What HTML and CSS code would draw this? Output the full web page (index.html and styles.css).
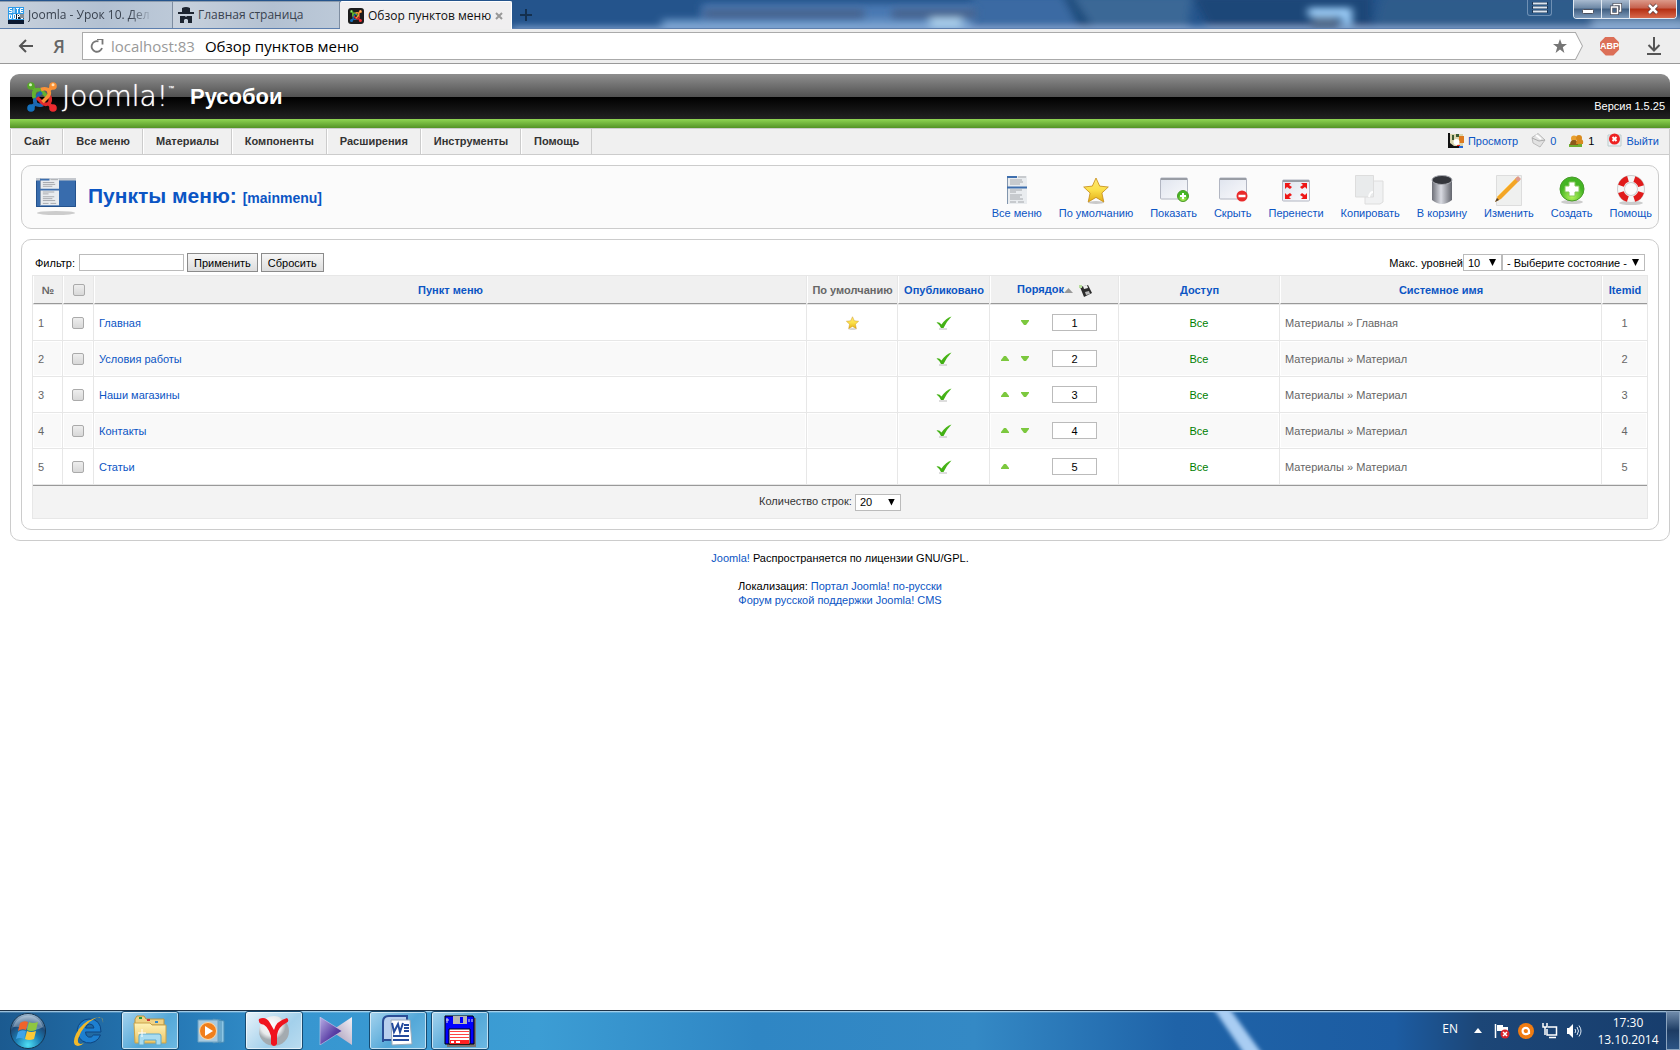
FILE: index.html
```html
<!DOCTYPE html>
<html lang="ru">
<head>
<meta charset="utf-8">
<title>Обзор пунктов меню</title>
<link rel="stylesheet" href="styles.css">
</head>
<body>
<svg class="defs" width="0" height="0" aria-hidden="true">
  <defs>
    <linearGradient id="gold" x1="0" y1="0" x2="0" y2="1"><stop offset="0" stop-color="#ffe873"/><stop offset=".5" stop-color="#fbe04a"/><stop offset="1" stop-color="#e3ae17"/></linearGradient>
    <linearGradient id="win" x1="0" y1="0" x2="1" y2="1"><stop offset="0" stop-color="#dfe4ee"/><stop offset="1" stop-color="#fafafc"/></linearGradient>
    <linearGradient id="steel"><stop offset="0" stop-color="#6e7078"/><stop offset=".45" stop-color="#d9dbe2"/><stop offset="1" stop-color="#63656d"/></linearGradient>
    <radialGradient id="lime" cx=".5" cy=".8"><stop offset="0" stop-color="#b8f55c"/><stop offset="1" stop-color="#44b524"/></radialGradient>
    <linearGradient id="leaf" x1="0" y1="0" x2="0" y2="1"><stop offset="0" stop-color="#4db81c"/><stop offset="1" stop-color="#3fae12"/></linearGradient>
    <radialGradient id="orb" cx=".5" cy=".9" r=".9"><stop offset="0" stop-color="#4fe0f5"/><stop offset=".4" stop-color="#1b7db4"/><stop offset=".7" stop-color="#1d4a78"/><stop offset="1" stop-color="#a9c3d8"/></radialGradient>
    <linearGradient id="folder" x1="0" y1="0" x2="0" y2="1"><stop offset="0" stop-color="#fff3b8"/><stop offset="1" stop-color="#ecc667"/></linearGradient>
    <radialGradient id="pearl" cx=".4" cy=".3"><stop offset="0" stop-color="#fff"/><stop offset=".7" stop-color="#e8eaec"/><stop offset="1" stop-color="#a4abb0"/></radialGradient>
    <linearGradient id="violet" x1="0" y1="0" x2="1" y2="1"><stop offset="0" stop-color="#b9b0e6"/><stop offset=".6" stop-color="#5b3fa6"/><stop offset="1" stop-color="#3a2380"/></linearGradient>
    <linearGradient id="silver" x1="1" y1="0" x2="0" y2="1"><stop offset="0" stop-color="#f3f1f6"/><stop offset="1" stop-color="#9d8fb0"/></linearGradient>
    <symbol id="joomla" viewBox="0 0 30 30">
      <g fill="none" stroke-width="3.600" stroke-linejoin="round">
        <path id="arm" d="M4 4L8 8M7.500 16Q5.500 11 8.500 8.500 12 6.500 15 9.500L20 14.500" stroke="#64b22f"/>
        <path d="M4 4L8 8M7.500 16Q5.500 11 8.500 8.500 12 6.500 15 9.500L20 14.500" stroke="#1c67b0" transform="rotate(270 15 15)"/>
        <path d="M4 4L8 8M7.500 16Q5.500 11 8.500 8.500 12 6.500 15 9.500L20 14.500" stroke="#e32a2c" transform="rotate(180 15 15)"/>
        <path d="M4 4L8 8M7.500 16Q5.500 11 8.500 8.500 12 6.500 15 9.500L20 14.500" stroke="#fa9238" transform="rotate(90 15 15)"/>
        <path d="M7.500 16Q5.500 11 8.500 8.500" stroke="#64b22f"/>
      </g>
      <circle cx="4" cy="4" r="3.800" fill="#55a828"/><circle cx="26" cy="4" r="3.800" fill="#f98f33"/><circle cx="4" cy="26" r="3.800" fill="#1571bd"/><circle cx="26" cy="26" r="3.800" fill="#ee2b2f"/>
      <circle cx="3.500" cy="2.800" r="1.500" fill="#d9f4bd"/><circle cx="26" cy="2.800" r="1.500" fill="#ffe0b8"/>
    </symbol>
    <symbol id="page" viewBox="0 0 20 28">
      <path d="M0 0h20v28H0z" fill="#e9ecef"/><path d="M.5 28V0" fill="none" stroke="#8195ad"/><path d="M0 1h10M0 11.500h20" stroke="#3e6fae" stroke-width="2"/>
      <path d="M11 1h8M3 4h12M3 6h13M3 8h10M3 14h12M3 16h6M3 19h12M3 21h10M3 23h13M3 26h6M11 26h6" stroke="#a5a8ac"/>
    </symbol>
    <symbol id="star" viewBox="0 0 26 27"><ellipse cx="13" cy="25.500" rx="8" ry="1.500" fill="#c9c9c9"/><path d="M13 1l3.700 8.100 8.600.9-6.400 6 1.900 9L13 20.400 5.200 25l1.900-9L.7 10l8.600-.9z" fill="url(#gold)" stroke="#c48a14" stroke-width=".8"/></symbol>
    <symbol id="pane" viewBox="0 0 28 24"><rect x=".5" y="1" width="27" height="21" rx="1" fill="url(#win)" stroke="#b2b6c2"/><path d="M1 2h26" stroke="#999da5" stroke-width="2"/></symbol>
    <symbol id="tick" viewBox="0 0 16 14"><path d="M3 13h8" stroke="#bbb"/><path d="M.5 6.500Q3 5.500 5.500 8.500 10 2 15.500.500 11 5 7.500 12H5Q3.500 8.500.5 6.500z" fill="url(#leaf)"/></symbol>
    <symbol id="up" viewBox="0 0 8 5"><path d="M3 0h2l3 4v1H0V4z" fill="#7cc83e"/></symbol>
    <symbol id="down" viewBox="0 0 8 5"><path d="M0 0h8v1L5 5H3L0 1z" fill="#7cc83e"/></symbol>
  </defs>
</svg>

<header class="browser">
  <div class="titlebar">
    <svg class="glass" width="1168" height="29" viewBox="0 0 1168 29" preserveAspectRatio="none" aria-hidden="true">
      <defs><filter id="soft" x="-20%" y="-80%" width="140%" height="260%"><feGaussianBlur stdDeviation="4"/></filter></defs>
      <path d="M0 0h1168v29H0z" fill="#24548c"/>
      <g filter="url(#soft)">
        <path d="M190 4h280v30H190z" fill="#4a78b2"/><path d="M150 20h320v14H150z" fill="#6c98c8"/><path d="M460-5h160l40 40H460z" fill="#3b6aa3"/><path d="M550-5l20 40h90L640-5z" fill="#1f4b7c"/>
        <path d="M560-5h120l-5 40h-90z" fill="#3b6896"/><path d="M680-5h180v40H700z" fill="#1b4678"/><path d="M870-5h300v40H860z" fill="#2f5c8b"/>
        <path d="M1080 20h100v16h-100z" fill="#7fa0c4"/><path d="M0 28h1168v6H0z" fill="#8fb0dc"/>
      </g>
      <g filter="url(#soft)"><path d="M192 9h160v10H192zM380 9h84v10h-84z" fill="#46648e"/><path d="M418 18h32v11h-32z" fill="#a9cdea"/></g>
      <g filter="url(#soft)"><path d="M796 8h44v20h-10V17h-34z" fill="#9fd0fb"/><path d="M800 17h26v12h-26z" fill="#56708f"/></g>
    </svg>
    <nav class="tabs" aria-label="Вкладки">
      <a class="tab" href="#"><svg width="16" height="17" viewBox="0 0 16 17"><path d="M0 0h16v17H0z" fill="#2d9be9"/><path d="M0 13h16v4H0z" fill="#0a1830"/><path d="M8 7h8v5H8z" fill="#123"/><path d="M4 1.500H1.500V3.500H4V5.500H1M6 1v5M8 1.500h3M9.500 1.500V6M15 1.500h-2.500v4H15M12.500 3.500H15M1.500 7.500v4H3.500V8H1.500M5.500 7.500h2v4h-2zM9.500 12V7.500H11.500V9.500H9.500M13 7v4.500h2V7" stroke="#fff" fill="none"/></svg><span class="tab-name fade">Joomla - Урок 10. Дел</span></a>
      <a class="tab" href="#"><svg width="16" height="17" viewBox="0 0 16 17"><path d="M4 1Q8-1 12 1V5h4v2H0V5h4zM2 9h5l1 1 1-1h5v7h-4v-3l-1-1H7l-1 1v3H2z" fill="#1c2430"/></svg><span class="tab-name">Главная страница</span></a>
      <a class="tab current" href="#"><svg width="16" height="16" viewBox="0 0 16 16"><rect width="16" height="16" rx="3" fill="#1c1c1c"/><use href="#joomla" x="2" y="2" width="12" height="12"/></svg><span class="tab-name">Обзор пунктов меню</span><svg class="tab-close" width="8" height="8" viewBox="0 0 8 8"><path d="M1 1l6 6M7 1L1 7" stroke="#999" stroke-width="2"/></svg></a>
      <button class="new-tab" aria-label="Новая вкладка"><svg width="12" height="12" viewBox="0 0 12 12"><path d="M6 0v12M0 6h12" stroke="#14304f" stroke-width="2"/></svg></button>
    </nav>
    <div class="window-controls">
      <button class="burger" aria-label="Меню"><svg width="16" height="11" viewBox="0 0 16 11"><path d="M0 1.500h16M0 5.500h16M0 9.500h16" stroke="#1b3656" stroke-width="3"/><path d="M1 1.500h14M1 5.500h14M1 9.500h14" stroke="#dce6f0" stroke-width="2"/></svg></button>
      <div class="window-group">
        <button aria-label="Свернуть"><svg width="12" height="12" viewBox="0 0 12 12"><rect x=".5" y="6.500" width="11" height="4" rx="1" fill="#fff" stroke="#4b4f5c"/></svg></button>
        <button aria-label="Развернуть"><svg width="12" height="12" viewBox="0 0 12 12"><g fill="none" stroke="#4b4f5c" stroke-width="3"><path d="M4 3V1.500h6.500V8H9"/><path d="M1.500 4h6v6.500h-6z"/></g><g fill="none" stroke="#fff" stroke-width="1.500"><path d="M4 2.500V1.500h6.500V8H9"/><path d="M1.500 4h6v6.500h-6z"/></g></svg></button>
        <button class="close" aria-label="Закрыть"><svg width="12" height="12" viewBox="0 0 12 12"><path d="M2 2l8 8M10 2l-8 8" stroke="#5a3a3a" stroke-width="4"/><path d="M2 2l8 8M10 2l-8 8" stroke="#fff" stroke-width="2.500"/></svg></button>
      </div>
    </div>
  </div>
  <div class="toolbar">
    <button class="tool" aria-label="Назад"><svg width="16" height="14" viewBox="0 0 16 14"><path d="M15 7H2M8 1L2 7l6 6" fill="none" stroke="#555" stroke-width="2"/></svg></button>
    <button class="tool ya">Я</button>
    <div class="address">
      <svg class="address-shape" width="100%" height="28" aria-hidden="true"><svg x="0" y="0" width="100%" height="28" viewBox="0 0 1500 28" preserveAspectRatio="none"><path d="M.5.500H1492.500L1499.500 14 1492.500 27.500H.5z" fill="#fff" stroke="#aaa"/></svg></svg>
      <svg class="reload" width="14" height="14" viewBox="0 0 14 14"><path d="M12 9A5.300 5.300 0 1 1 8.500 2.400" fill="none" stroke="#777" stroke-width="1.800"/><path d="M7 0h5.500v5.500" fill="none" stroke="#777" stroke-width="1.800"/></svg>
      <span class="host">localhost:83</span><span class="page-name">Обзор пунктов меню</span>
      <svg class="bookmark" width="14" height="14" viewBox="0 0 14 14"><path d="M7 0l1.800 5H14L9.800 8.300 11.400 14 7 10.600 2.600 14l1.600-5.700L0 5h5.200z" fill="#757575"/></svg>
    </div>
    <button class="tool abp"><span>ABP</span></button>
    <button class="tool" aria-label="Загрузки"><svg width="14" height="18" viewBox="0 0 14 18"><path d="M7 0v13M1.500 8L7 13.500 12.500 8M0 17h14" fill="none" stroke="#555" stroke-width="2"/></svg></button>
  </div>
</header>

<div class="admin">
  <div class="banner">
    <svg class="logo" width="30" height="30"><use href="#joomla"/></svg>
    <span class="wordmark">Joomla!<sup>™</sup></span>
    <span class="site">Русобои</span>
    <span class="version">Версия 1.5.25</span>
  </div>
  <div class="main">
    <div class="menubar">
      <nav class="menu"><a href="#">Сайт</a><a href="#">Все меню</a><a href="#">Материалы</a><a href="#">Компоненты</a><a href="#">Расширения</a><a href="#">Инструменты</a><a href="#">Помощь</a></nav>
      <div class="status">
        <a href="#"><svg width="16" height="15" viewBox="0 0 16 15"><path d="M1 1h14v12H1z" fill="#d9d5ae"/><path d="M0 0h2v10l4 3h7v2H0z" fill="#111"/><path d="M4 2h2v5H4zM8 1h3v3H8z" fill="#3c5c34"/><path d="M11 3h5v7h-5z" fill="#de7a1e"/><circle cx="8.500" cy="9" r="3" fill="#fff"/><path d="M11 13h4v2h-4z" fill="#2468d8"/><path d="M9 12h3v1H9z" fill="#e22"/></svg>Просмотр</a>
        <a href="#"><svg width="15" height="15" viewBox="0 0 15 15"><path d="M1 4.500L7 .5 14 7l-5 7-7-4z" fill="#e2e2e2" stroke="#bbb"/><path d="M1 5l7 3 6-1" fill="none" stroke="#aaa"/><path d="M5 2l5 4" stroke="#fff" stroke-width="2"/></svg>0</a>
        <span class="users"><svg width="15" height="12" viewBox="0 0 15 12"><path d="M0 9h13v3H0z" fill="#6fae31"/><circle cx="5" cy="3.500" r="3" fill="#e9a02f"/><circle cx="10" cy="3" r="3" fill="#d98a1b"/><path d="M1 10q0-5 4-5t4 5z" fill="#8c5a1a"/><path d="M7 9q0-5 4-5t3 5z" fill="#d68a20"/></svg>1</span>
        <a href="#"><svg width="15" height="15" viewBox="0 0 15 15"><path d="M1 2h13v11H1z" fill="#eef0f5" stroke="#bcc"/><circle cx="7.500" cy="6" r="5.500" fill="#e22"/><path d="M5.500 4l4 4M9.500 4l-4 4" stroke="#fff" stroke-width="2"/></svg>Выйти</a>
      </div>
    </div>
    <div class="content">
      <section class="box heading">
        <svg width="42" height="38" viewBox="0 0 42 38"><ellipse cx="21" cy="35" rx="19" ry="2" fill="#ccc"/><path d="M1 0h40v29H1z" fill="#386cad"/><path d="M1 1h40" stroke="#c4c8ce" stroke-width="3"/><path d="M1.500 3v25.500h39V3" fill="none" stroke="#24528d"/><use href="#page" x="5" y="0" width="19" height="28"/></svg>
        <h1>Пункты меню: <small>[mainmenu]</small></h1>
        <nav class="actions">
          <a href="#"><svg width="32" height="32"><use href="#page" x="6" y="2" width="20" height="28"/></svg>Все меню</a>
          <a href="#"><svg width="32" height="32"><use href="#star" x="3" y="3" width="26" height="27"/></svg>По умолчанию</a>
          <a href="#"><svg width="32" height="32"><use href="#pane" x="2" y="3" width="28" height="24"/><circle cx="25" cy="22" r="5.500" fill="url(#lime)" stroke="#4c9a28"/><path d="M25 19v6M22 22h6" stroke="#fff" stroke-width="2"/></svg>Показать</a>
          <a href="#"><svg width="32" height="32"><use href="#pane" x="2" y="3" width="28" height="24"/><circle cx="25" cy="22" r="5.500" fill="#e92a2a"/><path d="M21.500 22h7" stroke="#fff" stroke-width="2.500"/></svg>Скрыть</a>
          <a href="#"><svg width="32" height="32"><use href="#pane" x="2" y="5" width="28" height="24"/><g fill="#ee1616"><path d="M5 9h6l-2 2 3 2-2 2-3-2-2 2zM27 9h-6l2 2-3 2 2 2 3-2 2 2zM5 25h6l-2-2 3-2-2-2-3 2-2-2zM27 25h-6l2-2-3-2 2-2 3 2 2-2z"/></g></svg>Перенести</a>
          <a href="#"><svg width="32" height="32"><path d="M11 7h18v21l-3 2H11z" fill="#f0f1f2" stroke="#ddd"/><path d="M1.500 1.500h18V23l-4 0h-14z" fill="#e9ebec" stroke="#ddd"/><path d="M15 23q1-5 4-5" fill="none" stroke="#fff" stroke-width="2"/></svg>Копировать</a>
          <a href="#"><svg width="32" height="32"><path d="M6 6v20q10 8 20 0V6z" fill="url(#steel)"/><ellipse cx="16" cy="6" rx="10" ry="4.500" fill="#34363c" stroke="#a9abb2"/></svg>В корзину</a>
          <a href="#"><svg width="32" height="32"><path d="M3.500 1.500h25v30h-25z" fill="#eff0ef" stroke="#ddd"/><path d="M2 28l3-6L24 3l3 3L8 25z" fill="#f3a526"/><path d="M4 23L24 3" stroke="#ffd26b"/><path d="M22 5l3-3 3 3-3 3z" fill="#de9a8e"/><path d="M2 28l2-4 2 2z" fill="#543"/></svg>Изменить</a>
          <a href="#"><svg width="32" height="32"><ellipse cx="16" cy="28" rx="11" ry="2" fill="#ccc"/><circle cx="16" cy="15" r="12" fill="url(#lime)" stroke="#4a9b2c"/><path d="M13 8h6v4h4v6h-4v4h-6v-4H9v-6h4z" fill="#fff" stroke="#85c75b"/></svg>Создать</a>
          <a href="#"><svg width="32" height="32"><ellipse cx="16" cy="29" rx="12" ry="2" fill="#ccc"/><circle cx="16" cy="15" r="10" fill="none" stroke="#ccc" stroke-width="8"/><circle cx="16" cy="15" r="10" fill="none" stroke="#f6f6f6" stroke-width="6"/><circle cx="16" cy="15" r="10.500" fill="none" stroke="#e01b1b" stroke-width="6" stroke-dasharray="10 6.493" transform="rotate(17 16 15)"/></svg>Помощь</a>
        </nav>
      </section>
      <section class="box list">
        <form class="filters">
          <label for="filter">Фильтр:</label><input id="filter" type="text"><button type="button">Применить</button><button type="button">Сбросить</button>
          <div class="selects"><label for="levels">Макс. уровней</label><span class="drop levels"><select id="levels"><option>10</option></select></span><span class="drop state"><select aria-label="Состояние"><option>- Выберите состояние -</option></select></span></div>
        </form>
        <table>
          <colgroup><col class="c-num"><col class="c-check"><col><col class="c-default"><col class="c-pub"><col class="c-order"><col class="c-access"><col class="c-type"><col class="c-id"></colgroup>
          <thead><tr><th>№</th><th><input type="checkbox" aria-label="Выбрать все"></th><th><a href="#">Пункт меню</a></th><th>По умолчанию</th><th><a href="#">Опубликовано</a></th><th><a href="#">Порядок<svg class="sort" width="9" height="5" viewBox="0 0 9 5"><path d="M4.500 0L9 5H0z" fill="#999"/></svg></a><svg class="save" width="13" height="13" viewBox="0 0 13 13"><path d="M1 3l8-2 4 8-8 4z" fill="#2b2b2b"/><path d="M4 2l4-1 1 3-4 1z" fill="#eee"/><path d="M6 8l4-1 1 3-4 1z" fill="#bbb"/><path d="M0 1h3v3H0z" fill="#b6dc9a"/></svg></th><th><a href="#">Доступ</a></th><th><a href="#">Системное имя</a></th><th><a href="#">Itemid</a></th></tr></thead>
          <tfoot><tr><td colspan="9"><label for="rows">Количество строк:</label> <span class="drop rows"><select id="rows"><option>20</option></select></span></td></tr></tfoot>
          <tbody>
            <tr><td>1</td><td class="mid"><input type="checkbox" aria-label="Главная"></td><td><a href="#">Главная</a></td><td class="mid"><svg width="13" height="14"><use href="#star"/></svg></td><td class="mid"><svg width="16" height="14"><use href="#tick"/></svg></td><td><div class="order"><i></i><svg width="8" height="5"><use href="#down"/></svg><input type="text" value="1" aria-label="Порядок"></div></td><td class="mid"><a class="access" href="#">Все</a></td><td>Материалы » Главная</td><td class="mid">1</td></tr>
            <tr><td>2</td><td class="mid"><input type="checkbox" aria-label="Условия работы"></td><td><a href="#">Условия работы</a></td><td></td><td class="mid"><svg width="16" height="14"><use href="#tick"/></svg></td><td><div class="order"><svg width="8" height="5"><use href="#up"/></svg><svg width="8" height="5"><use href="#down"/></svg><input type="text" value="2" aria-label="Порядок"></div></td><td class="mid"><a class="access" href="#">Все</a></td><td>Материалы » Материал</td><td class="mid">2</td></tr>
            <tr><td>3</td><td class="mid"><input type="checkbox" aria-label="Наши магазины"></td><td><a href="#">Наши магазины</a></td><td></td><td class="mid"><svg width="16" height="14"><use href="#tick"/></svg></td><td><div class="order"><svg width="8" height="5"><use href="#up"/></svg><svg width="8" height="5"><use href="#down"/></svg><input type="text" value="3" aria-label="Порядок"></div></td><td class="mid"><a class="access" href="#">Все</a></td><td>Материалы » Материал</td><td class="mid">3</td></tr>
            <tr><td>4</td><td class="mid"><input type="checkbox" aria-label="Контакты"></td><td><a href="#">Контакты</a></td><td></td><td class="mid"><svg width="16" height="14"><use href="#tick"/></svg></td><td><div class="order"><svg width="8" height="5"><use href="#up"/></svg><svg width="8" height="5"><use href="#down"/></svg><input type="text" value="4" aria-label="Порядок"></div></td><td class="mid"><a class="access" href="#">Все</a></td><td>Материалы » Материал</td><td class="mid">4</td></tr>
            <tr><td>5</td><td class="mid"><input type="checkbox" aria-label="Статьи"></td><td><a href="#">Статьи</a></td><td></td><td class="mid"><svg width="16" height="14"><use href="#tick"/></svg></td><td><div class="order"><svg width="8" height="5"><use href="#up"/></svg><i></i><input type="text" value="5" aria-label="Порядок"></div></td><td class="mid"><a class="access" href="#">Все</a></td><td>Материалы » Материал</td><td class="mid">5</td></tr>
          </tbody>
        </table>
      </section>
    </div>
  </div>
  <footer class="credits">
    <p><a href="#">Joomla!</a> Распространяется по лицензии GNU/GPL.</p>
    <p>Локализация: <a href="#">Портал Joomla! по-русски</a><br><a href="#">Форум русской поддержки Joomla! CMS</a></p>
  </footer>
</div>

<footer class="taskbar">
  <button class="task start" aria-label="Пуск"><svg width="38" height="38" viewBox="0 0 38 38"><circle cx="19" cy="19" r="17.500" fill="url(#orb)" stroke="#16344f"/><path d="M4 15Q8 4 19 3.500 30 4 34 15 26 20 19 17 12 14 4 15z" fill="#fff" opacity=".3"/><path d="M11 11q4-3 8-1l-2 8q-4-2-8 1z" fill="#f0642a"/><path d="M20 10q4 2 9 0l-2 8q-5 2-9 0z" fill="#8fc640"/><path d="M9 20q4-3 8-1l-2 8q-4-2-8 0z" fill="#3fa4e8"/><path d="M18 19q4 2 9 0l-2 8q-5 2-9 0z" fill="#fbc937"/></svg></button>
  <button class="task" aria-label="Internet Explorer"><svg width="34" height="34" viewBox="0 0 34 34"><path d="M18 5a12 12 0 1 0 11.500 16h-7q-2 3-5 2-3-1-3-5H30Q30 5 18 5zm-3.500 9q1-4 4-4 4 0 4.500 4z" fill="#1d7fd0" stroke="#0e4580"/><path d="M32 9Q33 1 24 4 11 8 5 20 0 31 7 32q3 0 6-3-7 3-6-4Q12 10 25 4q7-3 7 5z" fill="#f2b92b"/></svg></button>
  <button class="task open" aria-label="Проводник"><svg width="34" height="34" viewBox="0 0 34 34"><path d="M2 5l2-3h7l2 3h18v6H2z" fill="#f0d384" stroke="#b89340"/><path d="M6 3h3v2H6z" fill="#2a9a3a"/><path d="M14 5h3v2h-3z" fill="#c33"/><path d="M22 7h3v2h-3z" fill="#38c"/><path d="M1 9h16l2 2h14v18H2z" fill="url(#folder)" stroke="#c9a249"/><path d="M6 31V22q0-2 2-2h18q2 0 2 2v9h-5v-5H11v5z" fill="#a9dcf0" stroke="#5aa9cf"/><path d="M9 15v8M5 19h8" stroke="#fff"/></svg></button>
  <button class="task" aria-label="Проигрыватель"><svg width="30" height="26" viewBox="0 0 30 26"><path d="M22 2l5 1v21l-5 1zM16 1l8 1v22l-8 1z" fill="#8ec6e4" stroke="#4a8db6"/><path d="M1 2h20v22H1z" fill="#a9cbe0" stroke="#6ba1c3"/><circle cx="11" cy="13" r="8.500" fill="#f07f1c" stroke="#ffd9a6"/><path d="M8 8l8 5-8 5z" fill="#fff"/></svg></button>
  <button class="task open active" aria-label="Яндекс.Браузер"><svg width="32" height="32" viewBox="0 0 32 32"><circle cx="16" cy="16" r="15" fill="url(#pearl)"/><path d="M1 4q7-3 11 4l4 7q2-9 13-12 3 3-1 5-8 4-9 12v9q-3 4-6 0v-8Q9 9 3 9 0 7 1 4z" fill="#f0141e"/></svg></button>
  <button class="task" aria-label="KMPlayer"><svg width="34" height="28" viewBox="0 0 34 28"><path d="M33 0v28L12 14z" fill="url(#silver)"/><path d="M1 0l22 14L1 28z" fill="url(#violet)" stroke="#dcd8f0" stroke-width=".5"/></svg></button>
  <button class="task open" aria-label="Word"><svg width="34" height="34" viewBox="0 0 34 34"><path d="M2 28V8q0-6 6-6h18v24H2z" fill="#b9d0ee" stroke="#2a4e96" stroke-width="2"/><path d="M10 6h19l2 24-20 1z" fill="#fff" stroke="#9ab"/><path d="M11 9l2 9 4-8 2 8 3-9M23 11h5M23 14h5M23 17h5M12 22h16M12 26h16" fill="none" stroke="#234a9c" stroke-width="2"/></svg></button>
  <button class="task open" aria-label="Дискета"><svg width="32" height="32" viewBox="0 0 32 32"><path d="M3 3h29v29H3z" fill="#777"/><path d="M1 1h28l1 2v26H1z" fill="#00f" stroke="#000"/><path d="M9 1h14v8H9z" fill="#b5b5b5"/><path d="M16 2h3v6h-3z" fill="#00f"/><path d="M5 14h21v15H5z" fill="#fff" stroke="#000"/><path d="M6 16.500h19M6 19.500h19M6 22.500h19" stroke="#f44"/><path d="M6 25h19v4H6z" fill="#f22"/><path d="M7 27h3M12 27h4" stroke="#fff" stroke-width="2"/><path d="M3 3v5M2 5h3M25 4v3M28 4v3" stroke="#ddd"/></svg></button>
  <svg class="beam" width="160" height="39" viewBox="0 0 160 39" preserveAspectRatio="none" aria-hidden="true"><defs><filter id="glow"><feGaussianBlur stdDeviation="2"/></filter></defs><path d="M58-6h16l36 50H92z" fill="#a9cdf3" filter="url(#glow)"/></svg>
  <div class="tray">
    <span class="lang">EN</span>
    <svg class="more" width="8" height="5" viewBox="0 0 8 5"><path d="M4 0l4 5H0z" fill="#fff"/></svg>
    <svg width="16" height="16" viewBox="0 0 16 16"><path d="M1.500 1v14" stroke="#fff" stroke-width="1.500"/><path d="M3 2h6v2h5v5H8V8H3z" fill="#fff"/><circle cx="11" cy="11" r="4.500" fill="#d8222a"/><path d="M9 9l4 4M13 9l-4 4" stroke="#fff" stroke-width="1.500"/></svg>
    <svg width="16" height="16" viewBox="0 0 16 16"><circle cx="8" cy="8" r="8" fill="#f07c12"/><path d="M11 11V8a3.200 3.200 0 1 0-3 3.200q3 0 3-3" fill="none" stroke="#fff" stroke-width="2.200"/></svg>
    <svg width="16" height="16" viewBox="0 0 16 16"><path d="M6 4h8.500v8H5V6M7 14.500h7" fill="none" stroke="#fff" stroke-width="1.500"/><path d="M1 0v4h4V0M3 4v8" fill="none" stroke="#fff" stroke-width="1.500"/></svg>
    <svg width="16" height="16" viewBox="0 0 16 16"><path d="M1 5h2l4-4v14l-4-4H1z" fill="#fff"/><path d="M9 6q1.500 2 0 4M11 4q3 4 0 8M13 2.500q4 5.500 0 11" fill="none" stroke="#dde8f4"/></svg>
    <time class="clock">17:30<br>13.10.2014</time>
    <button class="peek" aria-label="Показать рабочий стол"></button>
  </div>
</footer>
</body>
</html>
```
FILE: styles.css
```css
* { box-sizing: border-box; }
body { margin: 0; min-height: 100vh; display: flex; flex-direction: column; background: #fff; color: #000; font: 11px/14px "Liberation Sans", Arial, sans-serif; }
a { color: #0b55c4; text-decoration: none; }
button { margin: 0; padding: 0; border: 0; background: none; font: inherit; }
svg { flex: none; }
.defs { position: absolute; }

.browser, .taskbar { font-family: "Open Sans", "Noto Sans", sans-serif; }
.titlebar { display: flex; justify-content: space-between; position: relative; height: 29px; background: #24548c; border-bottom: 1px solid #5d7fae; }
.glass { position: absolute; top: 0; right: 0; width: calc(100% - 512px); height: 28px; }
.tabs { display: flex; position: relative; padding-top: 1px; }
.tab { display: flex; align-items: center; gap: 4px; width: 173px; padding: 0 8px; border-top: 1px solid #8d9cae; border-right: 1px solid #7e8da0; background: linear-gradient(90deg, #c9d2dd, #b3c1d2 60%, #bcc9d8); color: #39424f; font-size: 12px; line-height: 16px; white-space: nowrap; }
.tab + .tab { width: 167px; padding: 0 5px; }
.tab.current { width: 172px; height: 28px; padding: 0 8px; background: #f0eff0; border-color: #fff; color: #111; border-radius: 2px 2px 0 0; }
.tab-name { flex: 1; }
.fade { -webkit-mask-image: linear-gradient(90deg, #000 75%, transparent 92%); mask-image: linear-gradient(90deg, #000 75%, transparent 92%); overflow: hidden; }
.new-tab { width: 28px; display: grid; place-items: center; }
.window-controls { display: flex; gap: 21px; align-items: flex-start; position: relative; padding-right: 3px; }
.burger { width: 25px; height: 16px; border: 1px solid #6f90b4; border-top: 0; border-radius: 0 0 3px 3px; display: grid; place-items: center; }
.window-group { display: flex; height: 19px; border: 1px solid #e1e9f2; border-top: 0; border-radius: 0 0 4px 4px; overflow: hidden; }
.window-group button { width: 28px; display: grid; place-items: center; background: linear-gradient(#a9bbd0, #6d87a5 45%, #3f5d80 50%, #7d9aba); border-right: 1px solid #e1e9f2; }
.window-group .close { width: 46px; border: 0; background: linear-gradient(#dc9a8a, #c5604c 45%, #b42e12 50%, #d86a4c); }
.toolbar { display: flex; align-items: center; height: 35px; padding: 0 19px 0 18px; background: #eee; border-bottom: 1px solid #999; }
.tool { display: grid; place-items: center; }
.ya { width: 20px; margin-left: 15px; color: #666; font-size: 18px; line-height: 22px; font-weight: 600; }
.address { flex: 1; display: flex; align-items: center; position: relative; height: 28px; margin: 0 17px 0 13px; padding: 0 16px 0 8px; font-size: 15px; line-height: 22px; }
.address-shape { position: absolute; left: 0; top: 0; width: 100%; }
.address > :not(.address-shape) { position: relative; }
.host { margin: 0 10px 0 7px; color: #999; }
.bookmark { margin-left: auto; }
.abp { margin-right: 28px; }
.abp span { display: block; width: 19px; height: 19px; background: #dc6f57; color: #fff; font: bold 9px/19px "Liberation Sans", sans-serif; clip-path: polygon(30% 0, 70% 0, 100% 30%, 100% 70%, 70% 100%, 30% 100%, 0 70%, 0 30%); }

.admin { padding: 10px 10px 0; }
.banner { display: flex; align-items: center; height: 54px; padding: 0 5px 9px 17px; border-radius: 9px 9px 0 0; background: linear-gradient(#8fd653, #549326) bottom / 100% 9px no-repeat, linear-gradient(#8f8f8f, #515151 23px, #000 23px, #222 45px); color: #fff; }
.wordmark { margin-left: 5px; font: 200 28px/30px "DejaVu Sans", sans-serif; text-shadow: 0 0 1px #fff; }
.wordmark sup { font-size: 6px; line-height: 6px; vertical-align: 16px; }
.site { margin-left: 16px; font: bold 22px/28px "Liberation Sans", Arial, sans-serif; }
.version { margin-left: auto; margin-bottom: 6px; align-self: flex-end; }
.main { border: 1px solid #ccc; border-radius: 0 0 10px 10px; }
.menubar { display: flex; justify-content: space-between; height: 26px; background: #f0f0f0; border-bottom: 1px solid #ccc; }
.menu { display: flex; }
.menu a { padding: 0 12px; border-left: 1px solid #fff; border-right: 1px solid #ccc; color: #333; font-weight: bold; line-height: 24px; }
.status { display: flex; align-items: center; gap: 13px; padding: 0 10px 2px 0; }
.status a, .users { display: flex; align-items: center; gap: 4px; }
.content { display: grid; gap: 10px; padding: 10px; }
.box { border: 1px solid #ccc; border-radius: 10px; }
.heading { display: flex; align-items: center; min-height: 64px; padding: 0 6px 0 13px; background: #fbfbfb; }
h1 { margin: 0 auto 0 11px; color: #0b55c4; font-size: 21px; line-height: 28px; }
h1 small { font-size: 14px; }
.actions { display: flex; gap: 17px; }
.actions a { display: flex; flex-direction: column; align-items: center; }
.list { padding: 10px; }
.filters { display: flex; align-items: center; height: 25px; padding: 0 3px; }
.filters > button { height: 19px; margin-left: 3px; padding: 0 6px; border: 1px solid #8b8b8b; background: linear-gradient(#f6f6f6, #ddd); font-size: 11px; }
input[type="text"], select { height: 17px; border: 1px solid #bbb; border-radius: 0; background: #fff; font: inherit; }
.filters input { width: 105px; margin-left: 4px; }
.selects { display: flex; align-items: center; margin-left: auto; }
.drop { display: inline-block; position: relative; height: 17px; }
.drop::after { content: ""; position: absolute; right: 6px; top: 5px; width: 7px; height: 7px; background: #000; clip-path: polygon(0 0, 100% 0, 50% 100%); pointer-events: none; }
select { display: block; width: 100%; padding: 0 4px; appearance: none; color: #000; }
.levels { width: 39px; }
.state { width: 143px; }
.rows { width: 46px; vertical-align: middle; }
table { width: 100%; table-layout: fixed; border-spacing: 1px; background: #e7e7e7; color: #666; }
.c-num { width: 29px; } .c-check { width: 30px; } .c-default { width: 90px; } .c-pub { width: 91px; } .c-order { width: 128px; } .c-access { width: 160px; } .c-type { width: 321px; } .c-id { width: 45px; }
th { height: 28px; padding: 0; border-left: 1px solid #fff; border-bottom: 1px solid #999; background: #f0f0f0; white-space: nowrap; }
td { height: 35px; padding: 0 4px; border: 1px solid #fff; background: #fff; }
tbody tr:nth-child(even) td { background: #f9f9f9; }
tfoot td { height: 33px; padding-right: 24px; border: 0; border-top: 1px solid #999; background: #f3f3f3; color: #333; text-align: center; }
.mid { text-align: center; }
.mid svg, .mid input, th input { display: block; margin: 0 auto; }
input[type="checkbox"] { appearance: none; width: 12px; height: 12px; border: 1px solid #aaa; border-radius: 2px; background: linear-gradient(#eee, #d8d8d8); }
.sort { vertical-align: 0; }
.save { margin-left: 6px; vertical-align: -4px; }
.order { display: flex; align-items: center; gap: 12px; padding-left: 6px; }
.order i { width: 8px; }
.order input { width: 45px; margin-left: 11px; text-align: center; }
.access { color: #008000; }
.credits { padding-top: 10px; text-align: center; }
.credits p { margin: 0 0 14px; }

.taskbar { display: flex; align-items: center; gap: 4px; height: 40px; margin-top: auto; border-top: 1px solid #1d3247; background: linear-gradient(#c5e2f4 0, #c5e2f400 2px), linear-gradient(90deg, #1b5a90 0, #2577b4 10%, #3796d0 18%, #3c9dd4 32%, #2f86c4 45%, #3489c5 58%, #1f63a8 70%, #1c5ca2 83%, #1c4677 88%, #173d6d 100%); }
.task { width: 58px; height: 39px; display: grid; place-items: center; border: 1px solid transparent; border-radius: 3px; }
.task.start { width: 55px; }
.task.open { border-color: #164a70; background: linear-gradient(135deg, #a5d3ee, #54a8d8 55%, #6db9e2); box-shadow: inset 0 0 0 1px #ffffff99; }
.task.active { background: linear-gradient(135deg, #e8f3fa, #a3d0eb 60%, #badcf0); }
.beam { align-self: stretch; width: 160px; margin-left: auto; margin-right: 125px; }
.tray { display: flex; align-items: center; color: #fff; font-size: 12px; line-height: 16px; }
.tray svg { margin-right: 8px; }
.lang { margin-right: 16px; padding-bottom: 4px; }
.tray .more { margin-right: 12px; }
.clock { width: 76px; text-align: center; line-height: 17px; }
.peek { width: 14px; height: 39px; border: 1px solid #8ba4bf; background: linear-gradient(#6f8bab, #1d3c63 50%, #2c5484); }
```
